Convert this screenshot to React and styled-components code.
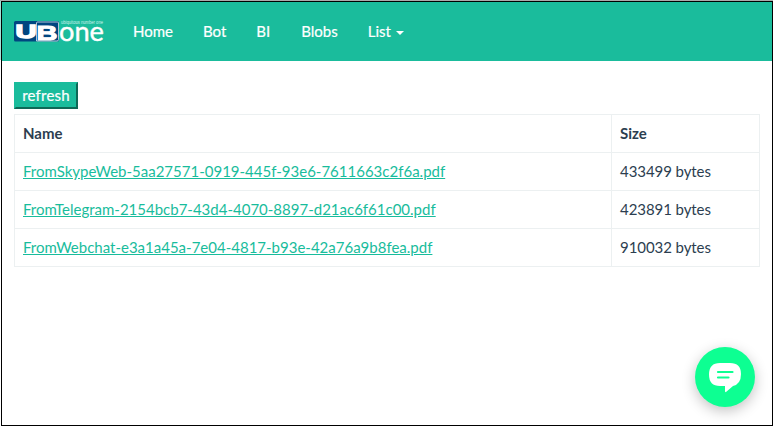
import React from "react";
import styled, { createGlobalStyle } from "styled-components";

const GlobalStyle = createGlobalStyle`
  * { box-sizing: border-box; }
  body {
    margin: 0;
    background: #fff;
    color: #2c3e50;
    font: 15px/21px Lato, "Liberation Sans", sans-serif;
  }
`;

const Frame = styled.div`
  height: 426px;
  padding: 1px 0 0 1px;
  background: linear-gradient(#aaa 1px, #a3e4d7 1px, #a3e4d7 60px, #fff 60px);
`;

const Page = styled.div`
  height: 425px;
  border: 1px solid #000;
  background: #fff;
`;

const Navbar = styled.nav`
  display: flex;
  align-items: center;
  height: 59px;
  padding-left: 12px;
  background: #1abc9c;
`;

const Logo = styled.svg`
  display: block;
  width: 91px;
  height: 25px;
  margin-right: 13px;
  overflow: visible;
`;

const NavLink = styled.a`
  display: flex;
  align-items: center;
  padding: 0 15px;
  color: #fff;
  -webkit-text-stroke: 0.2px #fff;
  cursor: pointer;

  &:nth-of-type(3) {
    padding-right: 16px;
  }
`;

const Caret = styled.span`
  margin: 2px 0 0 5px;
  border: 4px solid transparent;
  border-top-color: #fff;
  border-bottom: 0;
`;

const Content = styled.main`
  padding: 21px 12px 0;
`;

const Refresh = styled.button`
  display: block;
  width: 64px;
  height: 27px;
  padding: 1px 5px;
  border: 2px outset #1abc9c;
  background: #1abc9c;
  color: #fff;
  font: inherit;
  letter-spacing: 0.2px;
  -webkit-text-stroke: 0.2px #fff;
`;

const Table = styled.table`
  width: 746px;
  margin-top: 5px;
  table-layout: fixed;
  border-collapse: collapse;
`;

const Cell = styled.td`
  width: ${(p) => p.$width || "auto"};
  height: 38px;
  padding: 8px;
  border: 1px solid #ecf0f1;
  text-align: left;
`;

const SizeCell = styled(Cell)`
  letter-spacing: -0.07px;
`;

const FileLink = styled.a`
  color: #18bc9c;
  text-decoration: underline;
  cursor: pointer;
`;

const ChatButton = styled.button`
  position: fixed;
  left: 695px;
  top: 347px;
  width: 60px;
  height: 60px;
  padding: 0;
  border: 0;
  border-radius: 50%;
  background: #0dff92;
  box-shadow: 0 4px 14px rgba(0, 0, 0, 0.24);
`;

const ChatIcon = styled.svg`
  display: block;
  width: 60px;
  height: 60px;
`;

const links = ["Home", "Bot", "BI", "Blobs"];

const files = [
  ["FromSkypeWeb-5aa27571-0919-445f-93e6-7611663c2f6a.pdf", "433499 bytes"],
  ["FromTelegram-2154bcb7-43d4-4070-8897-d21ac6f61c00.pdf", "423891 bytes"],
  ["FromWebchat-e3a1a45a-7e04-4817-b93e-42a76a9b8fea.pdf", "910032 bytes"],
];

function BrandLogo() {
  return (
    <Logo viewBox="0 0 91 25" aria-label="UB one">
      <rect x="0" y="2" width="45" height="20.5" rx="1.5" fill="#004680" />
      <path d="M22.5 22V4Q22.5 3 23.5 3H43.5Q44.5 3 44.5 4V20.5Q44.5 22 43 22Z" fill="#004680" stroke="#fff" strokeWidth="0.7" />
      <text x="1.5" y="18.5" fill="#fff" stroke="#fff" strokeWidth="1.4" fontFamily="Liberation Sans" fontWeight="700" fontSize="19" textLength="21" lengthAdjust="spacingAndGlyphs">U</text>
      <text x="22.5" y="21" fill="#fff" stroke="#fff" strokeWidth="1" fontFamily="Liberation Sans" fontWeight="700" fontSize="20" textLength="21" lengthAdjust="spacingAndGlyphs">B</text>
      <text x="45" y="21.5" fill="#fff" stroke="#fff" strokeWidth="0.4" fontFamily="Lato" fontSize="27" textLength="45" lengthAdjust="spacingAndGlyphs">one</text>
      <text x="47" y="5" fill="#d1f2eb" fontFamily="Liberation Sans" fontSize="5" textLength="42" lengthAdjust="spacingAndGlyphs">ubiquitous number one</text>
    </Logo>
  );
}

export default function App() {
  return (
    <Frame>
      <GlobalStyle />
      <Page>
        <Navbar>
          <BrandLogo />
          {links.map((label) => (
            <NavLink key={label}>{label}</NavLink>
          ))}
          <NavLink>
            List
            <Caret />
          </NavLink>
        </Navbar>
        <Content>
          <Refresh>refresh</Refresh>
          <Table>
            <thead>
              <tr>
                <Cell as="th" $width="597px">Name</Cell>
                <Cell as="th">Size</Cell>
              </tr>
            </thead>
            <tbody>
              {files.map(([name, size]) => (
                <tr key={name}>
                  <Cell>
                    <FileLink>{name}</FileLink>
                  </Cell>
                  <SizeCell>{size}</SizeCell>
                </tr>
              ))}
            </tbody>
          </Table>
        </Content>
      </Page>
      <ChatButton aria-label="Chat">
        <ChatIcon viewBox="0 0 60 60">
          <path d="M25 16H35Q46 16 46 27Q46 37 38 39L31 45Q30 45.5 30 44V39H25Q14 39 14 27.5Q14 16 25 16Z" fill="#fff" />
          <path d="M23 25H37.5M23 30.5H33.5" stroke="#0dff92" strokeWidth="2.2" strokeLinecap="round" />
        </ChatIcon>
      </ChatButton>
    </Frame>
  );
}
